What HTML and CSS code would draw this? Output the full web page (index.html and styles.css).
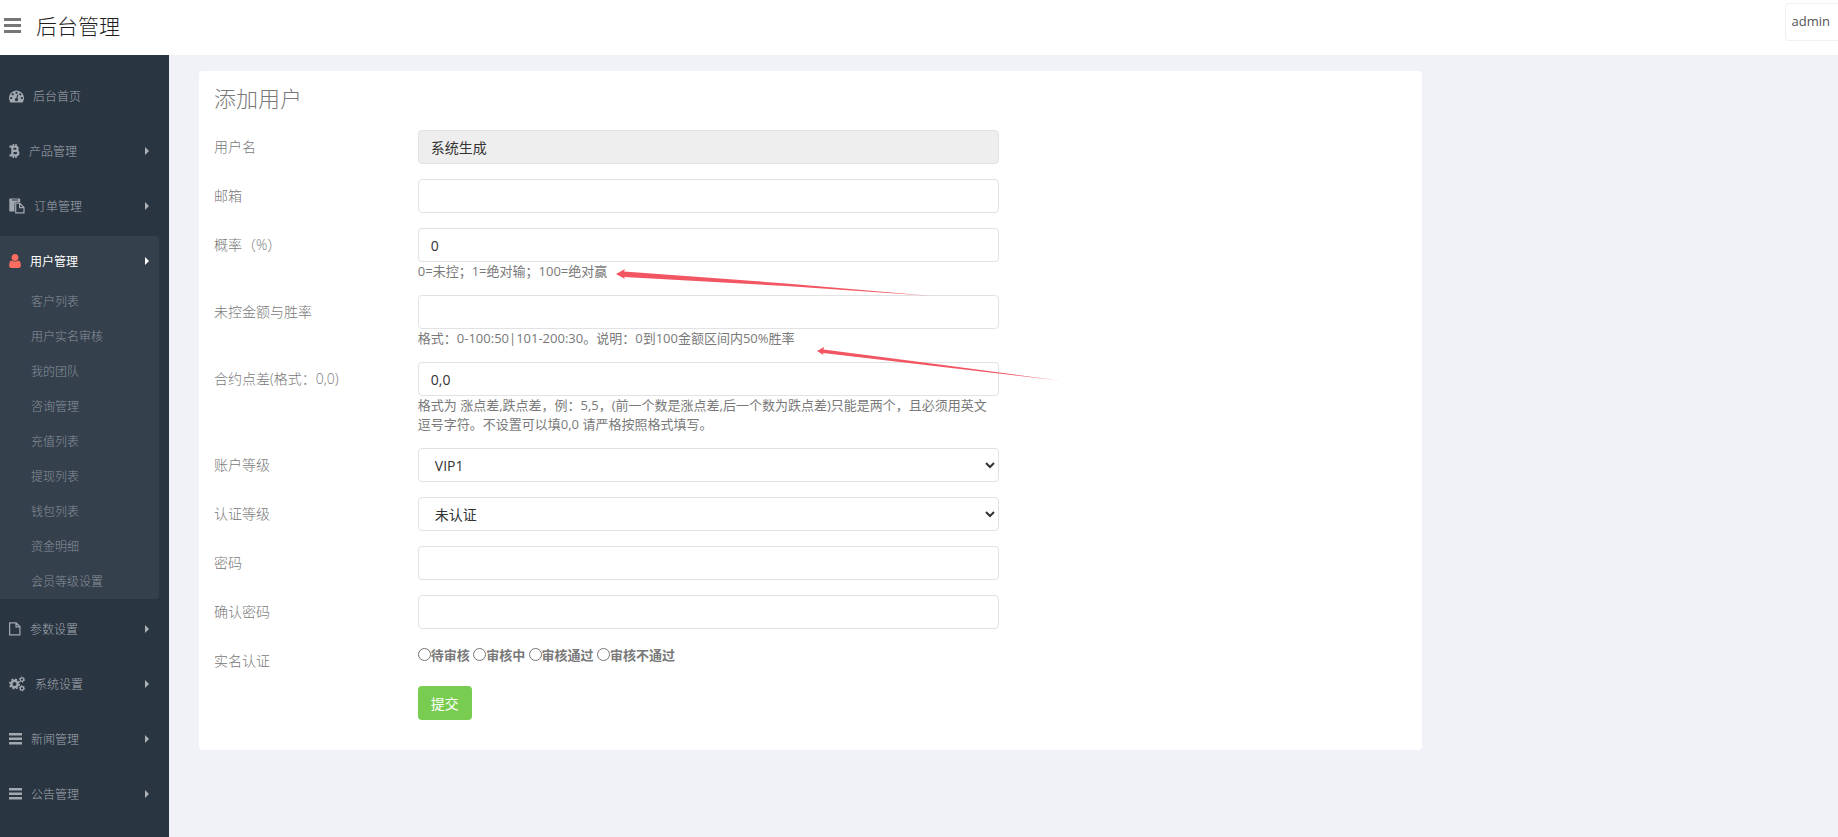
FILE: index.html
```html
<!DOCTYPE html>
<html lang="zh-CN">
<head>
    <meta charset="utf-8">
    <title>后台管理</title>
    <link rel="stylesheet" href="styles.css">
</head>
<body>

<header class="header">
    <button type="button" class="nav-toggle" aria-label="菜单">
        <svg width="17" height="15" viewBox="0 0 17 15"><path d="M0 0h17v3H0zM0 6h17v3H0zM0 12h17v3H0z"/></svg>
    </button>
    <a href="#" class="logo">后台管理</a>
    <a href="#" class="user">admin</a>
</header>

<div class="container">
    <nav class="sidebar">
        <ul class="menu">
            <li>
                <a href="#" class="menu-link">
                    <svg width="15" height="15" viewBox="0 64 1792 1792"><path d="M384 1152q0-53-37.500-90.500t-90.500-37.500-90.500 37.500-37.500 90.500 37.500 90.500 90.500 37.500 90.500-37.500 37.500-90.500zm192-448q0-53-37.500-90.500t-90.500-37.500-90.500 37.500-37.500 90.500 37.500 90.500 90.500 37.500 90.500-37.500 37.500-90.500zm428 481l101-382q6-26-7.500-48.500t-38.500-29.500-48 6.500-30 39.500l-101 382q-60 5-107 43.500t-63 98.500q-20 77 20 146t117 89 146-20 89-117q16-60-6-117t-72-91zm660-33q0-53-37.500-90.500t-90.500-37.500-90.500 37.500-37.500 90.500 37.500 90.500 90.500 37.500 90.500-37.500 37.500-90.500zm-640-640q0-53-37.500-90.500t-90.500-37.500-90.500 37.500-37.500 90.500 37.500 90.500 90.500 37.500 90.500-37.500 37.500-90.500zm448 192q0-53-37.500-90.500t-90.500-37.500-90.500 37.500-37.500 90.500 37.500 90.500 90.500 37.500 90.500-37.500 37.500-90.500zm320 448q0 261-141 483-19 29-54 29h-1402q-35 0-54-29-141-221-141-483 0-182 71-348t191-286 286-191 348-71 348 71 286 191 191 286 71 348z"/></svg>
                    <span>后台首页</span>
                </a>
            </li>
            <li>
                <a href="#" class="menu-link has-sub">
                    <svg width="11" height="14" viewBox="0 0 11 14"><path class="line" d="M.5 2.700h5.700c3.200 0 3.200 4.100 0 4.100H3.500h3.300c3.400 0 3.400 4.500 0 4.500H.5M3.400 2.500v9" stroke-width="2.200"/><path class="line" d="M4.400 0v2.500M7 0v2.500M4.400 11.500V14M7 11.500V14" stroke-width="1.500"/></svg>
                    <span>产品管理</span>
                </a>
            </li>
            <li>
                <a href="#" class="menu-link has-sub">
                    <svg width="16" height="16" viewBox="0 0 16 16"><path fill-rule="evenodd" d="M1 .5h9.500q.7 0 .7.700V4H7.500Q5.500 4 5.500 6v7.500H1q-.7 0-.7-.7V1.200Q.3.500 1 .5zM3 1.500v1h6v-1z"/><path class="line" d="M6.700 5.200h4l4.300 4.300v5.400H6.700zM10.600 5.200v4.400H15" stroke-width="1.200"/></svg>
                    <span>订单管理</span>
                </a>
            </li>
            <li class="active">
                <a href="#" class="menu-link has-sub">
                    <svg width="12" height="14" viewBox="256 128 1280 1536"><path d="M1536 1399q0 109-62.500 187t-150.500 78h-854q-88 0-150.500-78t-62.500-187q0-85 8.500-160.500t31.500-152 58.500-131 94-89 134.500-34.500q131 128 313 128t313-128q76 0 134.500 34.500t94 89 58.500 131 31.500 152 8.500 160.500zm-256-887q0 159-112.500 271.500t-271.500 112.500-271.500-112.500-112.500-271.500 112.500-271.500 271.500-112.500 271.500 112.500 112.500 271.500z"/></svg>
                    <span>用户管理</span>
                </a>
                <ul class="sub">
                    <li><a href="#">客户列表</a></li>
                    <li><a href="#">用户实名审核</a></li>
                    <li><a href="#">我的团队</a></li>
                    <li><a href="#">咨询管理</a></li>
                    <li><a href="#">充值列表</a></li>
                    <li><a href="#">提现列表</a></li>
                    <li><a href="#">钱包列表</a></li>
                    <li><a href="#">资金明细</a></li>
                    <li><a href="#">会员等级设置</a></li>
                </ul>
            </li>
            <li>
                <a href="#" class="menu-link has-sub">
                    <svg width="12" height="14" viewBox="0 0 12 14"><path class="line" d="M.6.900h6.600l3.700 3.700v8.300H.6zM7 .9v4h4" stroke-width="1.200"/></svg>
                    <span>参数设置</span>
                </a>
            </li>
            <li>
                <a href="#" class="menu-link has-sub">
                    <svg width="17" height="16" viewBox="0 0 17 16">
                        <circle class="line" cx="5.500" cy="8" r="3.200" stroke-width="2.400"/>
                        <circle class="line" cx="5.500" cy="8" r="4.800" stroke-width="1.600" stroke-dasharray="1.900 1.870"/>
                        <circle class="line" cx="13" cy="3.600" r="1.800" stroke-width="1.300"/>
                        <circle class="line" cx="13" cy="3.600" r="2.700" stroke-width="1" stroke-dasharray="1.200 1.627"/>
                        <circle class="line" cx="13" cy="12.300" r="1.800" stroke-width="1.300"/>
                        <circle class="line" cx="13" cy="12.300" r="2.700" stroke-width="1" stroke-dasharray="1.200 1.627"/>
                    </svg>
                    <span>系统设置</span>
                </a>
            </li>
            <li>
                <a href="#" class="menu-link has-sub">
                    <svg width="13" height="12" viewBox="0 0 13 12"><path d="M0 0h13v2.500H0zM0 4.500h13V7H0zM0 9h13v2.500H0z"/></svg>
                    <span>新闻管理</span>
                </a>
            </li>
            <li>
                <a href="#" class="menu-link has-sub">
                    <svg width="13" height="12" viewBox="0 0 13 12"><path d="M0 0h13v2.500H0zM0 4.500h13V7H0zM0 9h13v2.500H0z"/></svg>
                    <span>公告管理</span>
                </a>
            </li>
        </ul>
    </nav>

    <main class="main">
        <form class="panel">
            <h1>添加用户</h1>

            <div class="row">
                <label class="name" for="username">用户名</label>
                <div class="field"><input type="text" id="username" class="control" value="系统生成" readonly></div>
            </div>
            <div class="row">
                <label class="name" for="email">邮箱</label>
                <div class="field"><input type="text" id="email" class="control"></div>
            </div>
            <div class="row">
                <label class="name" for="rate">概率（%）</label>
                <div class="field">
                    <input type="text" id="rate" class="control" value="0">
                    <p class="help">0=未控；1=绝对输；100=绝对赢</p>
                </div>
            </div>
            <div class="row">
                <label class="name" for="amount">未控金额与胜率</label>
                <div class="field">
                    <input type="text" id="amount" class="control">
                    <p class="help">格式：0-100:50|101-200:30。说明：0到100金额区间内50%胜率</p>
                </div>
            </div>
            <div class="row">
                <label class="name" for="spread">合约点差(格式：0,0)</label>
                <div class="field">
                    <input type="text" id="spread" class="control" value="0,0">
                    <p class="help">格式为 涨点差,跌点差，例：5,5，(前一个数是涨点差,后一个数为跌点差)只能是两个，且必须用英文逗号字符。不设置可以填0,0 请严格按照格式填写。</p>
                </div>
            </div>
            <div class="row">
                <label class="name" for="level">账户等级</label>
                <div class="field">
                    <select id="level" class="control"><option>VIP1</option></select>
                </div>
            </div>
            <div class="row">
                <label class="name" for="auth">认证等级</label>
                <div class="field">
                    <select id="auth" class="control"><option>未认证</option></select>
                </div>
            </div>
            <div class="row">
                <label class="name" for="pwd">密码</label>
                <div class="field"><input type="password" id="pwd" class="control"></div>
            </div>
            <div class="row">
                <label class="name" for="pwd2">确认密码</label>
                <div class="field"><input type="password" id="pwd2" class="control"></div>
            </div>
            <div class="row" role="radiogroup" aria-labelledby="real">
                <span class="name" id="real">实名认证</span>
                <div class="field radios">
                    <label><input type="radio" name="real">待审核</label>
                    <label><input type="radio" name="real">审核中</label>
                    <label><input type="radio" name="real">审核通过</label>
                    <label><input type="radio" name="real">审核不通过</label>
                </div>
            </div>
            <div class="row">
                <span class="name"></span>
                <div class="field"><button type="submit" class="btn">提交</button></div>
            </div>
        </form>
    </main>
</div>

<!-- red pointer arrows over the form -->
<svg class="arrow arrow-rate" width="316" height="28" viewBox="0 0 316 28"><path d="M0 5L9 0 8 2.500 170 14.500 316 27 170 17 8 8 9 10z"/></svg>
<svg class="arrow arrow-amount" width="241" height="34" viewBox="0 0 241 34"><path d="M0 4L7 0 6.500 2.500 130 18.500 241 33.500 130 20.500 6 6 6.500 8z"/></svg>

</body>
</html>
```
FILE: styles.css
```css
* {
    box-sizing: border-box;
}
body {
    margin: 0;
    min-height: 100vh;
    display: flex;
    flex-direction: column;
    position: relative;
    background-color: #f1f2f7;
    color: #797979;
    font-family: "Open Sans", "Noto Sans CJK SC", sans-serif;
    font-size: 13px;
    line-height: 19px;
}
a {
    text-decoration: none;
}
ul {
    list-style: none;
    margin: 0;
    padding: 0;
}
svg {
    fill: currentColor;
    flex: none;
}
.line {
    fill: none;
    stroke: currentColor;
}

/* header */
.header {
    display: flex;
    align-items: center;
    height: 55px;
    padding: 0 0 4px 4px;
    background-color: white;
}
.nav-toggle {
    display: flex;
    padding: 0;
    border: 0;
    background: none;
    color: #777;
}
.logo {
    margin-left: 15px;
    margin-right: auto;
    color: #1e1e1e;
    font-size: 21px;
    font-weight: 300;
    line-height: 30px;
}
.user {
    align-self: flex-start;
    margin-top: 3px;
    padding: 8px 8px 9px 6px;
    border: 1px solid #f0f0f2;
    border-right: 0;
    border-radius: 4px 0 0 4px;
    color: #555;
}

.container {
    display: flex;
    flex: 1;
}

/* sidebar */
.sidebar {
    flex: 0 0 169px;
    padding: 16px 10px 0 0;
    background-color: #2a3542;
    font-size: 12px;
    font-weight: 300;
}
.menu > li {
    margin-bottom: 5px;
    border-radius: 0 4px 4px 0;
}
.menu-link {
    display: flex;
    align-items: center;
    gap: 9px;
    height: 50px;
    padding: 0 10px 0 9px;
    color: #a2a8b0;
}
.has-sub::after {
    content: "";
    margin-left: auto;
    border-left: 4px solid #aeb2b7;
    border-top: 4px solid transparent;
    border-bottom: 4px solid transparent;
}
.active {
    background-color: #35404d;
}
.active .menu-link {
    color: white;
    font-weight: 400;
}
.active .menu-link svg {
    color: #ff6c60;
}
.active .menu-link::after {
    border-left-color: white;
}
.sub {
    margin-top: -2px;
}
.sub a {
    display: block;
    padding-left: 31px;
    color: #88919b;
    line-height: 35px;
}

/* form */
.main {
    flex: 1;
    min-width: 0;
    padding: 16px 30px;
}
.panel {
    width: 76%;
    padding: 15px;
    border-radius: 4px;
    background-color: white;
}
.panel h1 {
    margin: 0 0 20px;
    font-size: 22px;
    font-weight: 300;
    line-height: 24px;
}
.row {
    display: flex;
    margin: 0 -15px 15px;
}
.name {
    flex: 0 0 calc(100% / 6);
    padding: 7px 15px 0;
    font-size: 14px;
    font-weight: 300;
    line-height: 20px;
}
.field {
    flex: 0 0 50%;
    padding: 0 15px;
}
.control {
    display: block;
    width: 100%;
    height: 34px;
    padding: 6px 12px;
    border: 1px solid #e2e2e4;
    border-radius: 4px;
    background-color: white;
    color: #333;
    font-family: inherit;
    font-size: 14px;
}
.control[readonly] {
    background-color: #eee;
}
.help {
    margin: 0 0 -1px;
}
.radios {
    padding-top: 2px;
    font-weight: 700;
}
.radios input {
    margin: 0;
    vertical-align: -1px;
}
.btn {
    display: block;
    height: 34px;
    padding: 0 13px;
    border: 0;
    border-radius: 4px;
    background-color: #78cd51;
    color: white;
    font-family: inherit;
    font-size: 14px;
}

.arrow {
    position: absolute;
    fill: #f15662;
    pointer-events: none;
}
.arrow-rate {
    left: 616px;
    top: 269px;
}
.arrow-amount {
    left: 817px;
    top: 347px;
}
```
